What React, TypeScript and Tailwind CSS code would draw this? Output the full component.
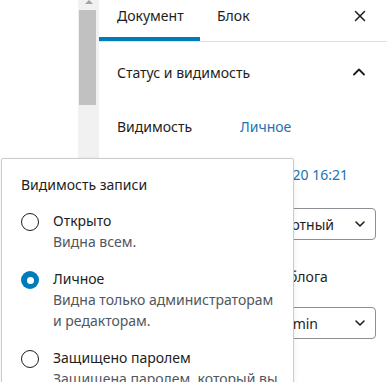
import { ChevronDown, ChevronUp, X } from "lucide-react";

const font = { fontFamily: '"Noto Sans", "Open Sans", sans-serif' };

const Radio = ({ checked }: { checked?: boolean }) =>
  checked ? (
    <span className="mt-[3px] size-[18px] shrink-0 rounded-full bg-[#007cba] flex items-center justify-center">
      <span className="size-[7px] rounded-full bg-white" />
    </span>
  ) : (
    <span className="mt-[3px] size-[18px] shrink-0 rounded-full border-[1.5px] border-[#1e1e1e]" />
  );

const Option = ({ title, desc, checked }: { title: string; desc: string; checked?: boolean }) => (
  <div className="flex gap-[14px]">
    <Radio checked={checked} />
    <div className="whitespace-nowrap leading-[21px]">
      <div className="text-[#1e1e1e]">{title}</div>
      {desc.split("\n").map((line) => (
        <div key={line} className="text-[#50575e]">
          {line}
        </div>
      ))}
    </div>
  </div>
);

export default function App() {
  return (
    <div style={font} className="relative h-[382px] w-[387px] overflow-hidden bg-white text-[14px] text-[#1e1e1e]">
      <div className="flex h-full">
        <div className="w-[78px]" />
        <div className="relative w-[21px] bg-[#f1f1f1]">
          <div className="mx-auto mt-0 h-0 w-0 border-x-[4px] border-b-[4px] border-x-transparent border-b-[#a3a3a3]" />
          <div className="absolute left-[1px] top-[10px] h-[95px] w-[17px] bg-[#c1c1c1]" />
        </div>
        <div className="flex-1">
          {/* tabs */}
          <div className="flex h-[42px] items-start border-b border-[#e0e0e0]">
            <div className="relative h-full w-[101px] pl-[18px] pt-[5px] leading-[21px]">
              Документ
              <span className="absolute bottom-[0px] left-0 h-[4px] w-full bg-[#007cba]" />
            </div>
            <div className="pl-[17px] pt-[5px] leading-[21px]">Блок</div>
            <X className="ml-auto mr-[18px] mt-[7px]" size={18} strokeWidth={2} />
          </div>

          {/* panel */}
          <div className="flex h-[60px] items-center pl-[18px] pr-[18px]">
            <span>Статус и видимость</span>
            <ChevronUp className="ml-auto" size={20} strokeWidth={2.2} />
          </div>
          <div className="flex h-[48px] items-center pl-[18px]">
            <span className="w-[123px]">Видимость</span>
            <span className="text-[#2271b1]">Личное</span>
          </div>
          <div className="flex h-[48px] items-center justify-end pr-[39px]">
            <span className="text-[#2271b1]">20 16:21</span>
          </div>
          <div className="mt-[10px] mr-[11px] flex h-[32px] items-center justify-end gap-[18px] rounded-[4px] border border-[#8c8f94] pr-[7px]">
            <span>артный</span>
            <ChevronDown size={16} strokeWidth={2.4} />
          </div>
          <div className="flex h-[67px] items-center pl-[190px] pt-[5px]">блога</div>
          <div className="mr-[11px] flex h-[32px] items-center justify-end gap-[34px] rounded-[4px] border border-[#8c8f94] pr-[7px]">
            <span>min</span>
            <ChevronDown size={16} strokeWidth={2.4} />
          </div>
        </div>
      </div>

      {/* visibility popover */}
      <div className="absolute left-[1px] top-[158px] h-[240px] w-[293px] rounded-[2px] border border-[#cccccc] bg-white shadow-[0_2px_6px_rgba(0,0,0,0.08)]">
        <div className="px-[19px] pt-[15px]">
          <div className="leading-[21px]">Видимость записи</div>
          <div className="mt-[15px] flex flex-col gap-[16px]">
            <Option title="Открыто" desc="Видна всем." />
            <Option checked title="Личное" desc={"Видна только администраторам\nи редакторам."} />
            <Option title="Защищено паролем" desc="Защищена паролем, который вы" />
          </div>
        </div>
      </div>
    </div>
  );
}
